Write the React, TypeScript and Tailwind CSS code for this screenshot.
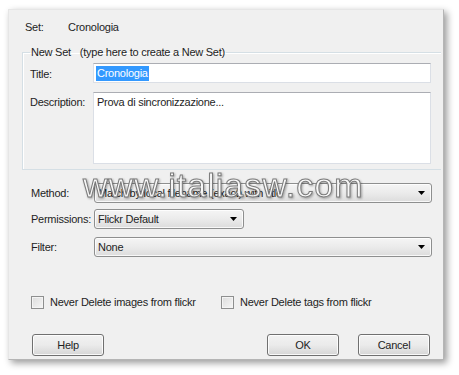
import type { ReactNode } from "react";

const font = "font-['Liberation_Sans',Arial,sans-serif] text-[11px] tracking-[-0.25px] text-[#1e1e1e]";

function Caret() {
  return (
    <svg width="7" height="4" viewBox="0 0 7 4" className="shrink-0">
      <path d="M0 0h7L3.5 4z" fill="#000" />
    </svg>
  );
}

function Dropdown({ value, width }: { value: string; width: string }) {
  return (
    <div
      className={`${width} h-[20px] flex items-center pl-[3px] pr-[6px] rounded-[3px] border border-[#8e8f8f] bg-gradient-to-b from-[#f5f5f5] via-[#ebebeb] to-[#dcdcdc] shadow-[inset_0_0_0_1px_rgba(255,255,255,0.8)]`}
    >
      <span className="flex-1 truncate">{value}</span>
      <Caret />
    </div>
  );
}

function Row({ label, children, className = "" }: { label: string; children: ReactNode; className?: string }) {
  return (
    <div className={`flex items-center pl-[22px] ${className}`}>
      <span className="w-[63px]">{label}</span>
      {children}
    </div>
  );
}

function Checkbox({ label }: { label: string }) {
  return (
    <label className="flex items-center gap-[6px]">
      <span className="w-[13px] h-[13px] border border-[#8e8f8f] bg-gradient-to-br from-[#dcdcdc] to-[#f6f6f6] shadow-[inset_0_0_0_1px_#f4f4f4]" />
      <span>{label}</span>
    </label>
  );
}

function WinButton({ children }: { children: ReactNode }) {
  return (
    <button className="w-[72px] h-[22px] rounded-[3px] border border-[#707070] bg-gradient-to-b from-[#f2f2f2] via-[#ebebeb] to-[#d6d6d6] shadow-[inset_0_0_0_1px_rgba(255,255,255,0.85)] text-[#1e1e1e]">
      {children}
    </button>
  );
}

export default function App() {
  return (
    <div className={`w-[459px] h-[375px] bg-white pt-[9px] pl-[8px] ${font}`}>
      <div className="relative w-[436px] h-[351px] flex flex-col bg-[#f0f0f0] border border-[#e6e6e6] border-r-[#b5b5b5] border-b-[#b5b5b5] shadow-[3px_3px_7px_rgba(0,0,0,0.4)]">
        <div className="flex h-[14px] items-center mt-[10px] pl-[16px]">
          <span className="w-[43px]">Set:</span>
          <span>Cronologia</span>
        </div>

        <fieldset className="mt-[11px] ml-[13px] mr-[2px] border-t border-l border-b border-[#d5dfe5] shadow-[inset_1px_1px_0_#fff] pl-[7px] pb-[5px]">
          <legend className="px-[1px] h-[14px] leading-[14px]">
            New Set<span className="ml-[9px]">(type here to create a New Set)</span>
          </legend>
          <div className="flex items-center h-[20px] mt-[4px]">
            <span className="w-[63px] pt-[3px]">Title:</span>
            <div className="w-[338px] h-[20px] flex items-center pl-[2px] bg-white border border-[#dbdfe6] border-t-[#abadb3]">
              <span className="bg-[#3399ff] text-white px-[1px] leading-[15px]">Cronologia</span>
            </div>
          </div>
          <div className="flex mt-[9px]">
            <span className="w-[63px] pt-[2px]">Description:</span>
            <div className="w-[338px] h-[72px] pl-[3px] pt-[1px] bg-white border border-[#dbdfe6] border-t-[#abadb3]">
              Prova di sincronizzazione...
            </div>
          </div>
        </fieldset>

        <Row label="Method:" className="mt-[13px]">
          <Dropdown value="Match by local filename (exact) with title" width="w-[338px]" />
        </Row>
        <Row label="Permissions:" className="mt-[6px]">
          <Dropdown value="Flickr Default" width="w-[150px]" />
        </Row>
        <Row label="Filter:" className="mt-[8px]">
          <Dropdown value="None" width="w-[338px]" />
        </Row>

        <div className="flex items-center mt-[39px] pl-[22px] h-[13px]">
          <div className="w-[190px]">
            <Checkbox label="Never Delete images from flickr" />
          </div>
          <Checkbox label="Never Delete tags from flickr" />
        </div>

        <div className="flex items-center mt-[25px] pl-[23px] pr-[13px]">
          <WinButton>Help</WinButton>
          <div className="ml-auto flex gap-[19px]">
            <WinButton>OK</WinButton>
            <WinButton>Cancel</WinButton>
          </div>
        </div>

        <div className="absolute left-[74px] top-[158px] text-[34px] leading-none tracking-[1px] text-white/90 [-webkit-text-stroke:1px_#7a7a7a] drop-shadow-[1px_1px_1px_rgba(0,0,0,0.35)] pointer-events-none">
          www.italiasw.com
        </div>
      </div>
    </div>
  );
}
